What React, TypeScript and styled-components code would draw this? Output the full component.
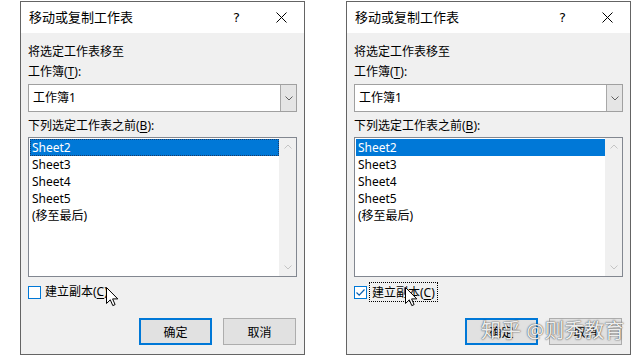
import React from "react";
import styled, { createGlobalStyle } from "styled-components";

const Global = createGlobalStyle`
  html, body { margin: 0; padding: 0; background: #fff; }
  body { font-family: "Noto Sans", "Noto Sans CJK SC", sans-serif; color: #000; }
`;

const Page = styled.div`
  display: flex;
  gap: 41px;
  padding: 1px 0 0 20px;
  height: 356px;
  box-sizing: border-box;
  background: #fff;
`;

const Dialog = styled.div`
  position: relative;
  width: 285px;
  height: 354px;
  box-sizing: border-box;
  border: 1px solid #646464;
  background: #f0f0f0;
  display: flex;
  flex-direction: column;
  font-size: 12px;
`;

const TitleBar = styled.div`
  height: 31px;
  background: #fff;
  display: flex;
  align-items: center;
  padding-left: 8px;
`;

const Title = styled.div`
  flex: 1;
  font-size: 13px;
  line-height: 31px;
`;

const CaptionButton = styled.div`
  width: 45px;
  height: 31px;
  display: flex;
  align-items: center;
  justify-content: center;
  font-family: "DejaVu Sans", sans-serif;
  font-size: 13px;
`;

const Body = styled.div`
  padding: 9px 7px 0 7px;
  display: flex;
  flex-direction: column;
`;

const Label = styled.div<{ $mt?: number }>`
  height: 20px;
  line-height: 20px;
  margin-top: ${(p) => p.$mt ?? 0}px;
  white-space: nowrap;
`;

const U = styled.span`
  text-decoration: underline;
  text-underline-offset: 2px;
`;

const Combo = styled.div`
  margin-top: 2px;
  height: 28px;
  box-sizing: border-box;
  border: 1px solid #a0a0a0;
  background: #fff;
  display: flex;
`;

const ComboText = styled.div`
  flex: 1;
  padding-left: 4px;
  line-height: 26px;
`;

const ComboButton = styled.div`
  width: 16px;
  box-sizing: border-box;
  border-left: 1px solid #a8a8a8;
  background: #e5e5e5;
  display: flex;
  align-items: center;
  justify-content: center;
`;

const ListBox = styled.div`
  margin-top: 1px;
  height: 140px;
  box-sizing: border-box;
  border: 1px solid #828790;
  background: #fff;
  display: flex;
`;

const Items = styled.div`
  flex: 1;
  padding: 1px 0 0 1px;
`;

const Item = styled.div<{ $selected?: boolean; $focus?: boolean }>`
  height: 17px;
  line-height: 17px;
  padding-left: 2px;
  box-sizing: border-box;
  background: ${(p) => (p.$selected ? "#0078d7" : "transparent")};
  color: ${(p) => (p.$selected ? "#fff" : "#000")};
  outline: ${(p) => (p.$focus ? "1px dotted #1b3a66" : "none")};
  outline-offset: -1px;
`;

const ScrollBar = styled.div`
  width: 17px;
  background: #f0f0f0;
  display: flex;
  flex-direction: column;
  justify-content: space-between;
`;

const ScrollArrow = styled.div`
  height: 17px;
  display: flex;
  align-items: center;
  justify-content: center;
`;

const CheckRow = styled.div`
  margin-top: 7px;
  height: 16px;
  display: flex;
  align-items: center;
`;

const CheckBox = styled.div`
  width: 13px;
  height: 13px;
  box-sizing: border-box;
  border: 1px solid #0078d7;
  background: #fff;
  display: flex;
  align-items: center;
  justify-content: center;
`;

const CheckLabel = styled.div<{ $focus?: boolean }>`
  margin-left: ${(p) => (p.$focus ? 2 : 4)}px;
  padding: 0 ${(p) => (p.$focus ? 2 : 0)}px;
  height: ${(p) => (p.$focus ? 20 : 16)}px;
  line-height: ${(p) => (p.$focus ? 20 : 16)}px;
  box-sizing: border-box;
  border: ${(p) => (p.$focus ? "1px dotted #000" : "none")};
`;

const ButtonRow = styled.div`
  margin-top: 18px;
  display: flex;
  justify-content: flex-end;
  gap: 11px;
  padding-right: 1px;
`;

const Button = styled.div<{ $default?: boolean }>`
  width: 73px;
  height: 27px;
  box-sizing: border-box;
  border: ${(p) => (p.$default ? "2px solid #0078d7" : "1px solid #adadad")};
  background: #e1e1e1;
  display: flex;
  align-items: center;
  justify-content: center;
`;

const Cursor = styled.svg<{ $x: number; $y: number }>`
  position: absolute;
  left: ${(p) => p.$x}px;
  top: ${(p) => p.$y}px;
`;

const Watermark = styled.div`
  position: absolute;
  left: 134px;
  top: 314px;
  font-size: 20px;
  line-height: 30px;
  white-space: nowrap;
  color: rgba(255, 255, 255, 0.92);
  text-shadow: 0 0 1px rgba(40, 40, 40, 0.9), 0 0 2px rgba(40, 40, 40, 0.5);
`;

const CloseIcon = () => (
  <svg width="11" height="11" viewBox="0 0 11 11">
    <path d="M0.5 0.5 L10.5 10.5 M10.5 0.5 L0.5 10.5" stroke="#000" strokeWidth="1" fill="none" />
  </svg>
);

const Chevron = ({ up, color }: { up?: boolean; color: string }) => (
  <svg width="8" height="5" viewBox="0 0 8 5">
    <path
      d={up ? "M0.5 4.5 L4 1 L7.5 4.5" : "M0.5 0.5 L4 4 L7.5 0.5"}
      stroke={color}
      strokeWidth="1"
      fill="none"
    />
  </svg>
);

const Pointer = ({ x, y }: { x: number; y: number }) => (
  <Cursor $x={x} $y={y} width="13" height="21" viewBox="0 0 13 21">
    <path
      d="M0.5 0.5 L0.5 16.5 L4.3 12.8 L6.8 18.6 L9.1 17.6 L6.6 11.9 L11.8 11.9 Z"
      fill="#fff"
      stroke="#000"
      strokeWidth="1"
      strokeLinejoin="miter"
    />
  </Cursor>
);

const sheets = ["Sheet2", "Sheet3", "Sheet4", "Sheet5", "(移至最后)"];

const MoveCopyDialog = ({ copied }: { copied: boolean }) => (
  <Dialog>
    <TitleBar>
      <Title>移动或复制工作表</Title>
      <CaptionButton>?</CaptionButton>
      <CaptionButton>
        <CloseIcon />
      </CaptionButton>
    </TitleBar>
    <Body>
      <Label>将选定工作表移至</Label>
      <Label>
        工作簿(<U>T</U>):
      </Label>
      <Combo>
        <ComboText>工作簿1</ComboText>
        <ComboButton>
          <Chevron color="#606060" />
        </ComboButton>
      </Combo>
      <Label $mt={4}>
        下列选定工作表之前(<U>B</U>):
      </Label>
      <ListBox>
        <Items>
          {sheets.map((s, i) => (
            <Item key={s} $selected={i === 0} $focus={i === 0 && !copied}>
              {s}
            </Item>
          ))}
        </Items>
        <ScrollBar>
          <ScrollArrow>
            <Chevron up color="#c4c4c4" />
          </ScrollArrow>
          <ScrollArrow>
            <Chevron color="#c4c4c4" />
          </ScrollArrow>
        </ScrollBar>
      </ListBox>
      <CheckRow>
        <CheckBox>
          {copied && (
            <svg width="11" height="11" viewBox="0 0 11 11">
              <path d="M1.5 5.5 L4.2 8.2 L9.5 2.5" stroke="#0a5fb0" strokeWidth="1.2" fill="none" />
            </svg>
          )}
        </CheckBox>
        <CheckLabel $focus={copied}>
          建立副本(<U>C</U>)
        </CheckLabel>
      </CheckRow>
      <ButtonRow>
        <Button $default>确定</Button>
        <Button>取消</Button>
      </ButtonRow>
    </Body>
    <Pointer x={copied ? 58 : 85} y={285} />
    {copied && <Watermark>知乎 @则秀教育</Watermark>}
  </Dialog>
);

export default function App() {
  return (
    <>
      <Global />
      <Page>
        <MoveCopyDialog copied={false} />
        <MoveCopyDialog copied={true} />
      </Page>
    </>
  );
}
